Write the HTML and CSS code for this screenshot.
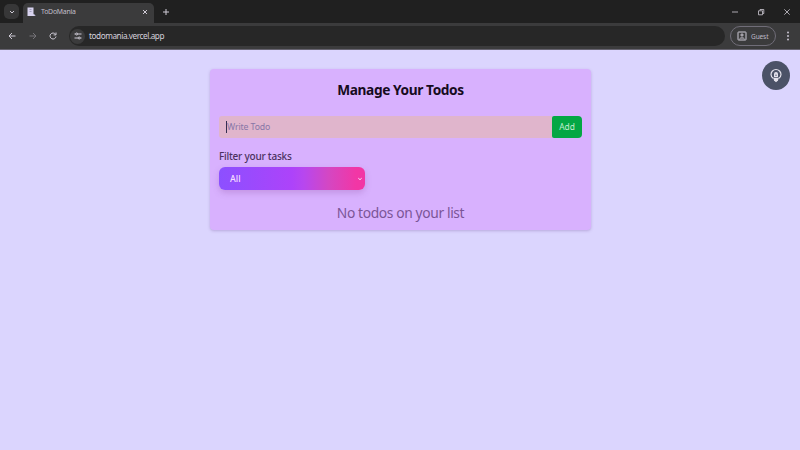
FILE: index.html
```html
<!DOCTYPE html>
<html lang="en">
<head>
<meta charset="utf-8">
<title>ToDoMania</title>
<link rel="stylesheet" href="styles.css">
</head>
<body>
<header class="browser">
  <div class="tabstrip">
    <span class="tab-search"><svg width="6" height="6" viewBox="0 0 6 6"><path d="M1 2l2 2 2-2"/></svg></span>
    <div class="tab">
      <svg class="favicon" width="10" height="10" viewBox="0 0 10 10"><path class="sheet" d="M.5 .5h6v6.500l2 2H.5z"/><path class="ink" d="M2.500 2.500h2M2.500 4.500h2M7 7l1.500 1.500"/></svg>
      <span class="tab-title">ToDoMania</span>
      <svg width="6" height="6" viewBox="0 0 6 6"><path d="M1 1l4 4M5 1L1 5"/></svg>
    </div>
    <svg class="new-tab" width="8" height="8" viewBox="0 0 8 8"><path d="M4 1v6M1 4h6"/></svg>
    <div class="window-controls">
      <svg width="8" height="8" viewBox="0 0 8 8"><path d="M1 4h6"/></svg>
      <svg width="8" height="8" viewBox="0 0 8 8"><path d="M1.500 2.800h4v4h-4zM3 2.500v-1h3.800v4H6"/></svg>
      <svg width="8" height="8" viewBox="0 0 8 8"><path d="M1.300 1.300l5.400 5.400M6.700 1.300L1.300 6.700"/></svg>
    </div>
  </div>
  <div class="toolbar">
    <div class="nav">
      <svg width="8" height="8" viewBox="0 0 8 8"><path d="M7.500 4H1M4 1L1 4l3 3"/></svg>
      <svg class="disabled" width="8" height="8" viewBox="0 0 8 8"><path d="M.5 4H7M4 1l3 3-3 3"/></svg>
      <svg width="8" height="8" viewBox="0 0 8 8"><path d="M6.500 2.300A3 3 0 1 0 7 4.500M7 .5v2.400H4.600"/></svg>
    </div>
    <div class="address">
      <span class="site-info"><svg width="8" height="8" viewBox="0 0 8 8"><path d="M.5 2h1.300M4 2h3.500M.5 6H4M6.200 6h1.300"/><circle cx="2.700" cy="2" r="1"/><circle cx="5.200" cy="6" r="1"/></svg></span>
      <span class="url">todomania.vercel.app</span>
    </div>
    <div class="guest">
      <svg width="10" height="10" viewBox="0 0 10 10"><rect x="1" y="1" width="8" height="8" rx=".5"/><circle cx="5" cy="4" r="1.100"/><path d="M2.500 8c.5-1.500 4.500-1.500 5 0"/></svg>
      <span>Guest</span>
    </div>
    <svg class="kebab" width="4" height="10" viewBox="0 0 4 10"><circle cx="2" cy="1.500" r="1"/><circle cx="2" cy="5" r="1"/><circle cx="2" cy="8.500" r="1"/></svg>
  </div>
</header>
<main class="page">
  <section class="card">
    <h1>Manage Your Todos</h1>
    <form class="add-row">
      <div class="field"><span class="caret"></span><span class="placeholder">Write Todo</span></div>
      <button type="button">Add</button>
    </form>
    <h2>Filter your tasks</h2>
    <div class="select"><span>All</span><svg width="4" height="4" viewBox="0 0 4 4"><path d="M.3 1.200L2 2.700l1.700-1.500"/></svg></div>
    <p class="empty">No todos on your list</p>
  </section>
  <div class="theme-toggle">
    <svg width="14" height="16" viewBox="0 0 14 16"><path d="M4.400 10.600C2.900 9.500 2 8.200 2 6.500a5 5 0 0 1 10 0c0 1.700-.9 3-2.400 4.100"/><path d="M5.600 8.500V6a1.400 1.400 0 0 1 2.800 0v2.500zM7 5v2.500"/><path class="base" d="M4.300 9.800h5.400L9 12.500 7 14.300 5 12.500z"/></svg>
  </div>
</main>
</body>
</html>
```
FILE: styles.css
```css
* { box-sizing: border-box; }
body {
  margin: 0;
  height: 450px;
  overflow: hidden;
  font-family: "Noto Sans", "Open Sans", sans-serif;
  background: #dbd5fe;
}
svg {
  display: block;
  flex: none;
  fill: none;
  stroke: #cfcbd6;
  stroke-width: 1;
}
.browser { height: 50px; background: #3b3b3c; border-bottom: 1px solid #666370; }
.tabstrip {
  display: flex;
  align-items: center;
  height: 23px;
  background: #202020;
}
.tab-search {
  display: grid;
  place-items: center;
  width: 15px;
  height: 15px;
  margin-left: 4px;
  border-radius: 5px;
  background: #373738;
}
.tab {
  display: flex;
  align-items: center;
  align-self: flex-end;
  width: 131px;
  height: 20px;
  margin-left: 4px;
  padding: 0 6px 2px 4px;
  border-radius: 5px 5px 0 0;
  background: #3b3b3c;
}
.favicon .sheet { fill: #d8d3ef; stroke: none; }
.favicon .ink { stroke: #8c8ba9; stroke-width: .7; }
.tab-title {
  flex: 1;
  margin-left: 4px;
  color: #c2bfca;
  font-size: 6.900px;
  letter-spacing: -.22px;
  line-height: 10px;
}
.new-tab { margin-left: 8px; }
.window-controls { display: flex; gap: 18px; margin-left: auto; padding-right: 9px; }
.window-controls svg { stroke-width: .8; }
.toolbar { display: flex; align-items: center; height: 26px; padding-left: 8px; }
.nav { display: flex; gap: 12.500px; }
.disabled { opacity: .4; }
.address {
  display: flex;
  align-items: center;
  width: 656px;
  height: 20px;
  margin-left: 12px;
  padding-left: 2px;
  border-radius: 10px;
  background: #272727;
}
.site-info {
  display: grid;
  place-items: center;
  width: 15px;
  height: 15px;
  margin-left: -1px;
  border-radius: 50%;
  background: #3b3b3c;
}
.url { margin-left: 4px; color: #d5d1dc; font-size: 8.200px; letter-spacing: -.43px; line-height: 12px; }
.guest {
  display: flex;
  align-items: center;
  gap: 4px;
  width: 46px;
  height: 20px;
  margin-left: 5px;
  padding-left: 6px;
  border: 1px solid #706d78;
  border-radius: 10px;
  color: #bebac7;
  font-size: 6.500px;
  letter-spacing: -.1px;
}
.kebab { margin-left: 10px; fill: #c6c2ce; stroke: none; }
.page { position: relative; height: 400px; padding-top: 19px; }
.card {
  width: 381px;
  height: 161px;
  margin-left: 210px;
  padding: 11px 9px 0;
  border-radius: 4px;
  background: #d8b1fe;
  box-shadow: 0 1px 3px #75519a55;
}
h1 {
  margin: 0;
  color: #160b20;
  font-size: 13.700px;
  font-weight: 700;
  letter-spacing: -.4px;
  line-height: 19px;
  text-align: center;
}
.add-row { display: flex; height: 22px; margin-top: 17px; }
.field {
  display: flex;
  align-items: center;
  flex: 1;
  padding-left: 7px;
  border-radius: 3px 0 0 3px;
  background: #e0b5cc;
}
.caret { width: 1px; height: 12px; background: #342e50; }
.placeholder { color: #8775a7; font-size: 8.700px; letter-spacing: -.1px; line-height: 12px; }
.add-row button {
  width: 30px;
  padding: 0 0 1px;
  border: 0;
  border-radius: 2px 4px 4px 2px;
  background: #04a744;
  color: #c4edcf;
  font-family: inherit;
  font-size: 8.400px;
}
h2 { margin: 11px 0 0; color: #4b315f; font-size: 10px; font-weight: 500; letter-spacing: -.23px; line-height: 14px; }
.select {
  display: flex;
  align-items: center;
  justify-content: space-between;
  width: 146px;
  height: 23px;
  margin-top: 4px;
  padding: 0 3px 0 11px;
  border-radius: 6px;
  background: linear-gradient(90deg, #8c50ff 0%, #ad43fa 50%, #b747ef 58%, #d447c3 75%, #f236a5 94%);
  box-shadow: 0 3px 6px #88489944;
  color: #f4dfff;
  font-size: 8.800px;
  font-weight: 500;
}
.select svg { stroke: #f9def5; }
.empty { margin: 13px 0 0; color: #7b5597; font-size: 13.800px; letter-spacing: -.37px; line-height: 20px; text-align: center; }
.theme-toggle {
  position: absolute;
  top: 11px;
  right: 10px;
  display: grid;
  place-items: center;
  width: 28px;
  height: 29px;
  border-radius: 50%;
  background: #4b5267;
}
.theme-toggle svg { stroke: #e3e1eb; stroke-width: 1.200; }
.theme-toggle .base { fill: #e3e1eb; stroke: none; }
```
